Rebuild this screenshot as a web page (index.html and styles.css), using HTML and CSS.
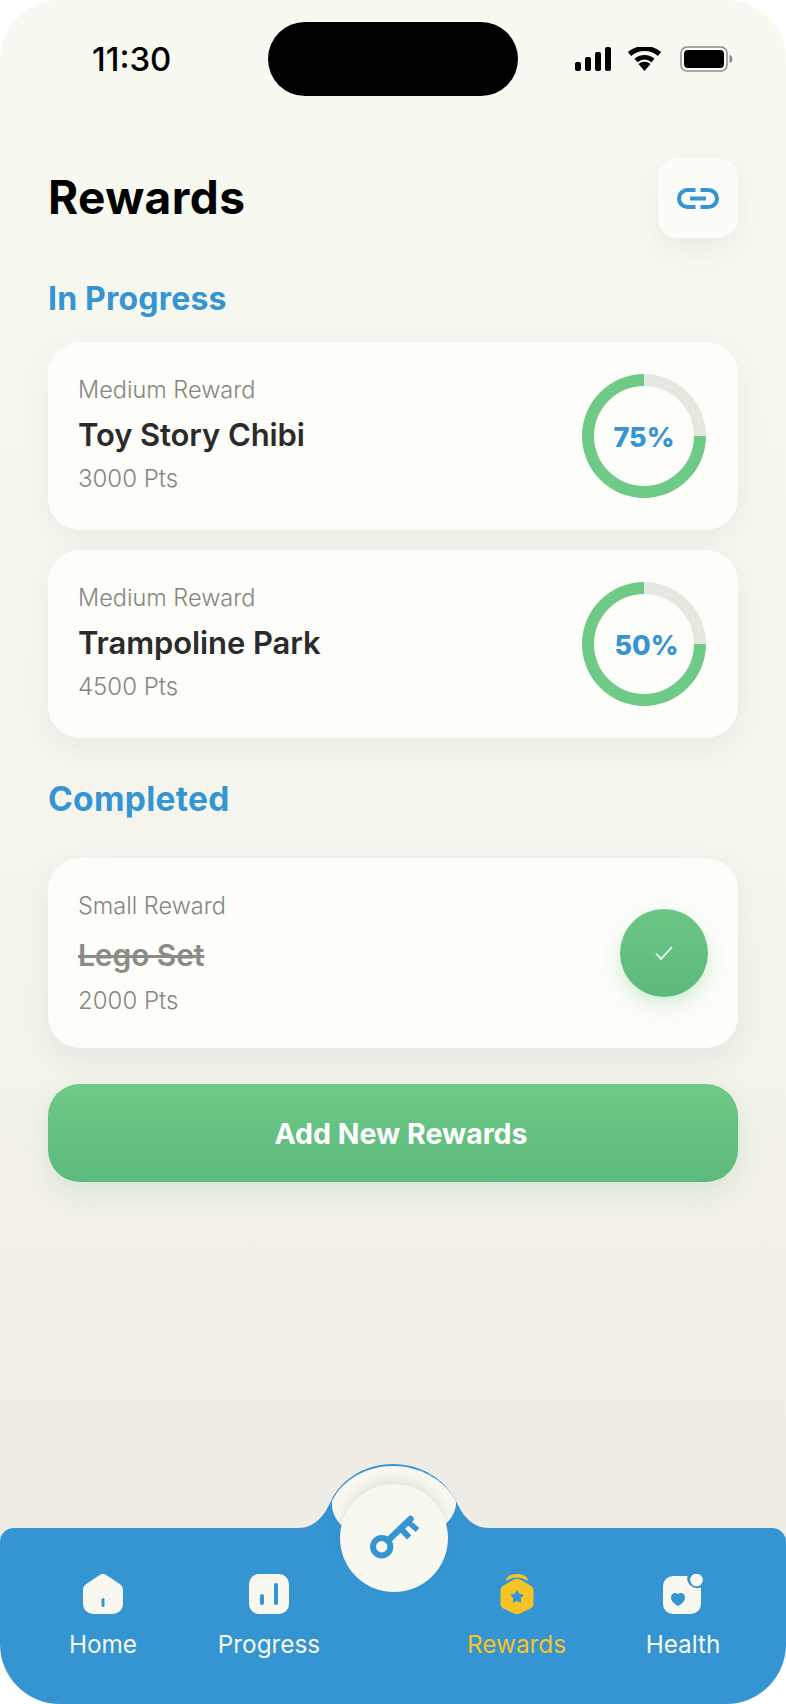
FILE: index.html
```html
<!DOCTYPE html>
<html lang="en">
<head>
	<meta charset="utf-8">
	<title>Rewards</title>
	<link rel="stylesheet" href="styles.css">
</head>
<body>
<div class="screen">
	<div class="status">
		<span class="time">11:30</span>
		<div class="island"></div>
		<div class="status-icons">
			<svg width="36" height="24" viewBox="0 0 36 24"><rect x="0" y="15" width="6" height="9" rx="2"/><rect x="10" y="10" width="6" height="14" rx="2"/><rect x="20" y="5" width="6" height="19" rx="2"/><rect x="30" y="0" width="6" height="24" rx="2"/></svg>
			<svg class="wifi" width="35" height="24" viewBox="0 0 34 24"><path d="M17 24l-6-7a9 9 0 0 1 12 0z"/><path d="M8.500 13.500a13 13 0 0 1 17 0" fill="none" stroke="#000" stroke-width="4.500"/><path d="M2 7a23 23 0 0 1 30 0" fill="none" stroke="#000" stroke-width="5"/></svg>
			<svg class="battery" width="54" height="26" viewBox="0 0 54 26"><rect x="1" y="1" width="46" height="24" rx="6" fill="none" stroke="#8d8d88" stroke-width="1.500"/><rect x="4" y="4" width="40" height="18" rx="4"/><path d="M49.500 9c2 .5 3 2 3 4s-1 3.500-3 4z" fill="#8d8d88"/></svg>
		</div>
	</div>

	<main class="content">
		<header class="title-row">
			<h1>Rewards</h1>
			<button class="link-btn" type="button">
				<svg width="42" height="21" viewBox="0 0 42 21" fill="none" stroke="#3595d3" stroke-width="4"><path d="M18.500 2H10.500a8.500 8.500 0 0 0 0 17h8"/><path d="M23.500 2h8a8.500 8.500 0 0 1 0 17h-8"/><path d="M13 10.500h16"/></svg>
			</button>
		</header>

		<h2 class="section first">In Progress</h2>
		<div class="card">
			<div class="info">
				<div class="kind">Medium Reward</div>
				<div class="name">Toy Story Chibi</div>
				<div class="pts">3000 Pts</div>
			</div>
			<div class="ring"><div class="ring-hole">75%</div></div>
		</div>
		<div class="card second">
			<div class="info">
				<div class="kind">Medium Reward</div>
				<div class="name">Trampoline Park</div>
				<div class="pts">4500 Pts</div>
			</div>
			<div class="ring"><div class="ring-hole shifted">50%</div></div>
		</div>

		<h2 class="section completed">Completed</h2>
		<div class="card done">
			<div class="info">
				<div class="kind">Small Reward</div>
				<div class="name struck">Lego Set</div>
				<div class="pts">2000 Pts</div>
			</div>
			<div class="check">
				<svg width="20" height="16" viewBox="0 0 20 16" fill="none" stroke="#fff" stroke-width="1.600"><path d="M2 8.500l5 5.500L18 2"/></svg>
			</div>
		</div>

		<button class="add-btn" type="button">Add New Rewards</button>
	</main>

	<nav class="nav">
		<svg class="nav-bg" width="786" height="240" viewBox="0 0 786 240">
			<path d="M14 64H298C316 64 325 50 331 37C342 14 366 0 393 0C420 0 444 14 456 37C462 50 471 64 489 64H772A14 14 0 0 1 786 78V240H0V78A14 14 0 0 1 14 64Z" fill="#3595d3"/>
			<path d="M332 37C343 15 367 2 393 2C419 2 444 15 456 37C457 48 448 60 440 64H346C338 60 331 50 332 37Z" fill="#f8f8f0"/>
		</svg>
		<div class="fab">
			<svg width="56" height="50" viewBox="0 0 56 50" fill="none" stroke="#3595d3"><circle cx="15.700" cy="33.700" r="8.700" stroke-width="6"/><path d="M22 27.500L44.500 6" stroke-width="6.500" stroke-linecap="round"/><path d="M42 9l9.500 8" stroke-width="5.500"/><path d="M35 15.500l8 9" stroke-width="6"/></svg>
		</div>
		<a class="nav-item">
			<svg width="40" height="40" viewBox="0 0 40 40"><path d="M16 1.500a7 7 0 0 1 8 0l12 8a8 8 0 0 1 4 7V30a10 10 0 0 1-10 10H10A10 10 0 0 1 0 30V16.500a8 8 0 0 1 4-7z" fill="#f8f8f0"/><rect x="18.500" y="24" width="3" height="9" rx="1.500" fill="#3595d3"/></svg>
			<span>Home</span>
		</a>
		<a class="nav-item">
			<svg width="40" height="40" viewBox="0 0 40 40"><rect width="40" height="40" rx="10" fill="#f8f8f0"/><rect x="11" y="20" width="4" height="11" rx="2" fill="#3595d3"/><rect x="25" y="9" width="4" height="22" rx="2" fill="#3595d3"/></svg>
			<span>Progress</span>
		</a>
		<div></div>
		<a class="nav-item active">
			<svg width="40" height="40" viewBox="0 0 40 40"><path d="M9 7C9 2.500 14 0 20 0S31 2.500 31 7C27 4.500 24 3.500 20 3.500S13 4.500 9 7z" fill="#f6c324"/><path d="M17 5.500q3-1.500 6 0l10.500 6q3 1.500 3 5v13q0 3.500-3 5l-10.500 5q-3 1.500-6 0l-10.500-5q-3-1.500-3-5v-13q0-3.500 3-5z" fill="#f6c324"/><path d="M20 16.500l2.100 3.700 4.100.8-2.900 3.100.5 4.200-3.800-1.800-3.800 1.800.5-4.200-2.900-3.100 4.100-.8z" fill="#3595d3" stroke="#3595d3" stroke-linejoin="round"/></svg>
			<span>Rewards</span>
		</a>
		<a class="nav-item">
			<svg width="40" height="40" viewBox="0 0 40 40"><path d="M10 2H24.500A10 10 0 0 0 38 13.500V30a10 10 0 0 1-10 10H10A10 10 0 0 1 0 30V12A10 10 0 0 1 10 2z" fill="#f8f8f0"/><circle cx="33.500" cy="6" r="6.300" fill="#f8f8f0"/><path d="M15 32C11 30 8 27 8 23.500C8 20.500 10 19 12 19C13.500 19 14.500 19.500 15 20.500C15.500 19.500 16.500 19 18 19C20 19 22 20.500 22 23.500C22 27 19 30 15 32Z" fill="#3595d3"/></svg>
			<span>Health</span>
		</a>
	</nav>
</div>
</body>
</html>
```

FILE: styles.css
```css
* {
	box-sizing: border-box;
}

html, body {
	margin: 0;
	background: #fff;
}

body {
	width: 786px;
	height: 1704px;
	overflow: hidden;
	font-family: Inter, "Liberation Sans", sans-serif;
}

.screen {
	position: relative;
	width: 786px;
	height: 1704px;
	border-radius: 60px;
	overflow: hidden;
	background: linear-gradient(#f8f9f0 0%, #f5f5ee 50%, #efece5 88%);
}

.status {
	position: relative;
	height: 118px;
}

.time {
	position: absolute;
	left: 92px;
	top: 40px;
	font-size: 33px;
	line-height: 38px;
	font-weight: 500;
	color: #000;
}

.island {
	position: absolute;
	left: 268px;
	top: 22px;
	width: 250px;
	height: 74px;
	border-radius: 37px;
	background: #000;
}

.status-icons {
	position: absolute;
	left: 575px;
	top: 46px;
	display: flex;
	gap: 16px;
	align-items: center;
}

.battery {
	margin-left: 2px;
}

.content {
	padding: 0 48px;
}

.title-row {
	display: flex;
	justify-content: space-between;
	align-items: center;
	padding-top: 40px;
}

h1 {
	margin: 0;
	padding-bottom: 3px;
	font-size: 46px;
	line-height: 50px;
	font-weight: 700;
	letter-spacing: 0.4px;
	color: #000;
}

.link-btn {
	width: 80px;
	height: 80px;
	border: 0;
	padding: 0;
	border-radius: 20px;
	background: #fcfcf8;
	box-shadow: 0 12px 28px rgba(90, 80, 60, 0.07);
	display: flex;
	align-items: center;
	justify-content: center;
}

.section {
	margin: 0;
	font-size: 32px;
	line-height: 40px;
	font-weight: 700;
	letter-spacing: 0.2px;
	color: #3595d3;
	padding-top: 41px;
	padding-bottom: 39px;
}

.section.first {
	margin-top: 41px;
	padding-top: 0;
	padding-bottom: 23px;
}

.section.completed {
	font-size: 33.500px;
	letter-spacing: 0.3px;
}

.card {
	height: 188px;
	padding: 0 32px 0 30px;
	border-radius: 32px;
	background: #fdfdf9;
	box-shadow: 0 10px 30px rgba(90, 80, 60, 0.07);
	display: flex;
	justify-content: space-between;
	align-items: center;
}

.second {
	margin-top: 20px;
}

.done {
	height: 190px;
	padding-right: 30px;
}

.info {
	display: flex;
	flex-direction: column;
	padding-bottom: 3px;
}

.done .info {
	padding-bottom: 0;
}

.kind {
	font-size: 23.500px;
	line-height: 32px;
	font-weight: 300;
	color: #85877f;
}

.pts {
	font-size: 24px;
	line-height: 32px;
	font-weight: 300;
	color: #85877f;
}

.name {
	font-size: 31px;
	line-height: 44px;
	font-weight: 600;
	letter-spacing: -0.1px;
	color: #2b2b2b;
	margin: 7px 0 6px;
}

.struck {
	font-size: 30px;
	margin: 11px 0 8px;
	color: #8b8d85;
	text-decoration: line-through;
}

.ring {
	width: 124px;
	height: 124px;
	border-radius: 50%;
	background: conic-gradient(#e4e8de 0 25%, #6fc987 25% 100%);
	display: flex;
	align-items: center;
	justify-content: center;
}

.ring-hole {
	width: 100px;
	height: 100px;
	border-radius: 50%;
	background: #fdfdf9;
	color: #3595d3;
	font-size: 27px;
	font-weight: 800;
	padding-top: 2px;
	display: flex;
	align-items: center;
	justify-content: center;
}

.shifted {
	padding-left: 5px;
}

.check {
	width: 88px;
	height: 88px;
	border-radius: 50%;
	background: linear-gradient(#6cc686, #5cba7c);
	box-shadow: 0 8px 18px rgba(92, 186, 124, 0.25);
	display: flex;
	align-items: center;
	justify-content: center;
}

.add-btn {
	display: block;
	width: 100%;
	height: 98px;
	margin-top: 36px;
	padding: 0 0 0 16px;
	border: 0;
	border-radius: 32px;
	background: linear-gradient(#6fc987, #5cba7c);
	box-shadow: 0 10px 24px rgba(92, 186, 124, 0.18);
	color: #fff;
	font-family: inherit;
	font-size: 28.500px;
	font-weight: 700;
}

.nav {
	position: absolute;
	left: 0;
	top: 1464px;
	width: 786px;
	height: 240px;
	padding: 110px 20px 0;
	display: grid;
	grid-template-columns: 166px 166px 81px 167px 166px;
	align-items: start;
}

.nav-bg {
	position: absolute;
	left: 0;
	top: 0;
}

.fab {
	position: absolute;
	left: 340px;
	top: 20px;
	width: 108px;
	height: 108px;
	border-radius: 50%;
	background: #f8f8f0;
	box-shadow: 0 -6px 10px rgba(90, 80, 60, 0.1);
	display: flex;
	align-items: center;
	justify-content: center;
}

.nav-item {
	position: relative;
	display: flex;
	flex-direction: column;
	align-items: center;
	gap: 15px;
	color: #f8f8f0;
	font-size: 24.300px;
	line-height: 30px;
}

.nav-item.active {
	color: #f6c324;
}
```
